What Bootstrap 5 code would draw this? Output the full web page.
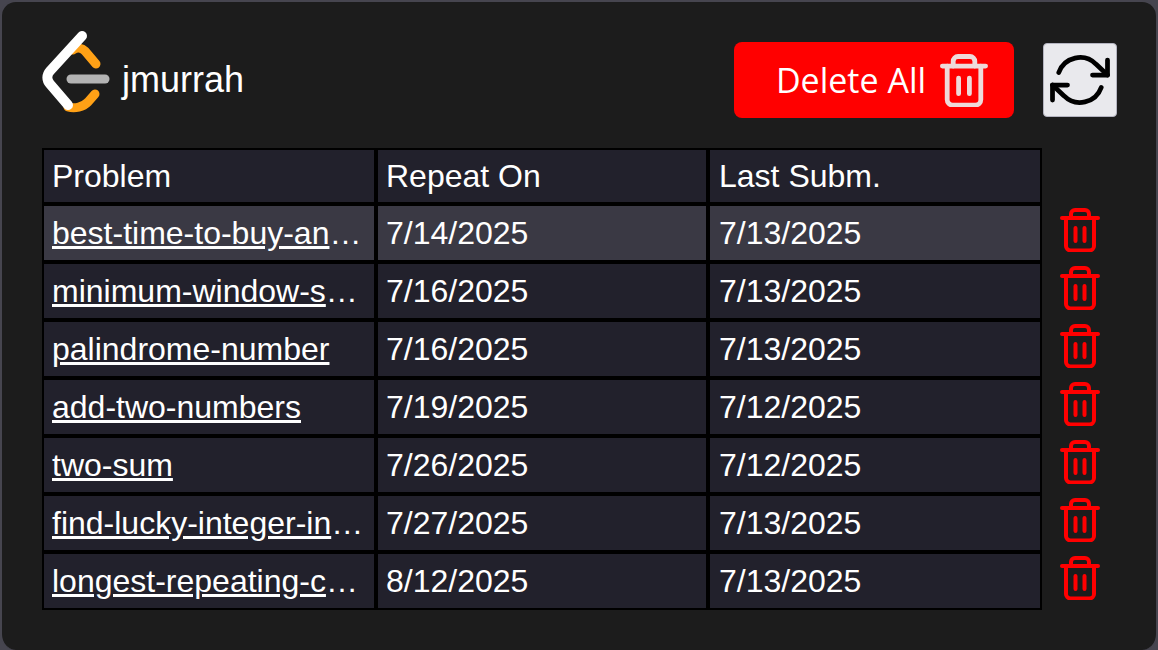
<!DOCTYPE html>
<html lang="en">
<head>
<meta charset="utf-8">
<title>jmurrah</title>
<link href="https://cdn.jsdelivr.net/npm/bootstrap@5.3.0/dist/css/bootstrap.min.css" rel="stylesheet">
<style>
html, body { height: 650px; margin: 0; background: #46454f; overflow: hidden; }
body { font-family: "Liberation Sans", Arial, sans-serif; }
.shell { height: 650px; background: #1c1c1c; border: 2px solid #46454f; border-bottom: 0; border-radius: 16px; padding: 35px 38px 0 40px; color: #fff; }
.topbar { height: 86px; margin-bottom: 25px; }
.logo-svg { width: 72px; height: 104px; display: block; margin-left: -2px; flex: none; }
.user-name { font-size: 36px; line-height: 40px; margin-left: 10px; }
.del-all { width: 280px; height: 76px; background: #ff0000; border: 0; border-radius: 8px; color: #fff; font-family: "Open Sans", sans-serif; font-size: 34px; padding: 0 0 0 16px; gap: 14px; }
.del-all:hover, .del-all:active { background: #ff0000 !important; color: #fff !important; }
.del-all svg { width: 48px; height: 53px; color: #eedada; }
.reload { width: 74px; height: 74px; background: #e9e9ed; border: 1px solid #b4b4c0; border-radius: 4px; padding: 0; margin-left: 29px; margin-right: 1px; }
.reload:hover { background: #e9e9ed; }
.reload svg { width: 60px; height: 60px; display: block; margin: auto; }
.grid-table { width: 1076px; table-layout: fixed; border-collapse: separate; border-spacing: 0; margin: 0; font-size: 32px; }
.grid-table th, .grid-table td.data { background: #22212c; color: #fff; border: 2px solid #000; padding: 0 8px; font-weight: 400; white-space: nowrap; overflow: hidden; text-overflow: ellipsis; }
.grid-table th:nth-child(3), .grid-table td.data:nth-child(3) { padding-left: 9px; }
.grid-table th { height: 56px; }
.grid-table td { height: 58px; }
.grid-table tr.hot td.data { background: #3a3944; }
.grid-table a { color: #fff; text-decoration: underline; }
.grid-table td.act { border: 0; padding: 0; text-align: center; background: transparent; }
.c1 { width: 334px; } .c2 { width: 332px; } .c3 { width: 334px; }
.bin { width: 40px; height: 44px; color: #ff0000; display: block; margin: 0 auto 6px 18px; }
</style>
</head>
<body>
<svg width="0" height="0" class="d-block position-absolute">
  <symbol id="bin" viewBox="0 0 40 44">
    <g fill="none" stroke="currentColor" stroke-width="4" stroke-linecap="round" stroke-linejoin="round">
      <path d="M2 10h36"/>
      <path d="M6 10v28a4.500 4.500 0 0 0 4.500 4.500h19a4.500 4.500 0 0 0 4.500-4.500V10"/>
      <path d="M11 10V6a4 4 0 0 1 4-4h10a4 4 0 0 1 4 4v4"/>
      <path d="M15.500 20v13M24.500 20v13"/>
    </g>
  </symbol>
</svg>
<main class="shell">
  <header class="topbar d-flex align-items-center justify-content-between">
    <div class="d-flex align-items-center">
      <svg class="logo-svg" viewBox="40 28 72 104" fill="none" stroke-linecap="round" stroke-linejoin="round">
        <path d="M73 50c4-3 9-2 12 1l11 13" stroke="#ffa116" stroke-width="9"/>
        <path d="M95 94l-7 8c-5 5-13 7-20 5" stroke="#ffa116" stroke-width="9"/>
        <path d="M82 36L50 71c-3.500 4-3.500 9 0 13l18 21" stroke="#fff" stroke-width="10"/>
        <path d="M71 79h34" stroke="#b3b3b3" stroke-width="9"/>
      </svg>
      <span class="user-name">jmurrah</span>
    </div>
    <div class="d-flex align-items-center">
      <button type="button" class="btn del-all d-flex align-items-center justify-content-center">Delete All <svg><use href="#bin"/></svg></button>
      <button type="button" class="btn reload" aria-label="Refresh">
        <svg viewBox="0 0 24 24" fill="none" stroke="#000" stroke-width="1.900" stroke-linecap="round" stroke-linejoin="round">
          <path d="M23 4v6h-6"/><path d="M1 20v-6h6"/>
          <path d="M3.510 9a9 9 0 0 1 14.850-3.360L23 10"/><path d="M1 14l4.640 4.360A9 9 0 0 0 20.490 15"/>
        </svg>
      </button>
    </div>
  </header>
  <table class="grid-table">
    <colgroup><col class="c1"><col class="c2"><col class="c3"><col></colgroup>
    <thead><tr><th>Problem</th><th>Repeat On</th><th>Last Subm.</th><th class="border-0 bg-transparent"></th></tr></thead>
    <tbody>
      <tr class="hot"><td class="data"><a href="#">best-time-to-buy-and-sell-stock</a></td><td class="data">7/14/2025</td><td class="data">7/13/2025</td><td class="act"><svg class="bin"><use href="#bin"/></svg></td></tr>
      <tr><td class="data"><a href="#">minimum-window-substring</a></td><td class="data">7/16/2025</td><td class="data">7/13/2025</td><td class="act"><svg class="bin"><use href="#bin"/></svg></td></tr>
      <tr><td class="data"><a href="#">palindrome-number</a></td><td class="data">7/16/2025</td><td class="data">7/13/2025</td><td class="act"><svg class="bin"><use href="#bin"/></svg></td></tr>
      <tr><td class="data"><a href="#">add-two-numbers</a></td><td class="data">7/19/2025</td><td class="data">7/12/2025</td><td class="act"><svg class="bin"><use href="#bin"/></svg></td></tr>
      <tr><td class="data"><a href="#">two-sum</a></td><td class="data">7/26/2025</td><td class="data">7/12/2025</td><td class="act"><svg class="bin"><use href="#bin"/></svg></td></tr>
      <tr><td class="data"><a href="#">find-lucky-integer-in-an-array</a></td><td class="data">7/27/2025</td><td class="data">7/13/2025</td><td class="act"><svg class="bin"><use href="#bin"/></svg></td></tr>
      <tr><td class="data"><a href="#">longest-repeating-character-replacement</a></td><td class="data">8/12/2025</td><td class="data">7/13/2025</td><td class="act"><svg class="bin"><use href="#bin"/></svg></td></tr>
    </tbody>
  </table>
</main>
<script src="https://cdn.jsdelivr.net/npm/bootstrap@5.3.0/dist/js/bootstrap.bundle.min.js"></script>
</body>
</html>
